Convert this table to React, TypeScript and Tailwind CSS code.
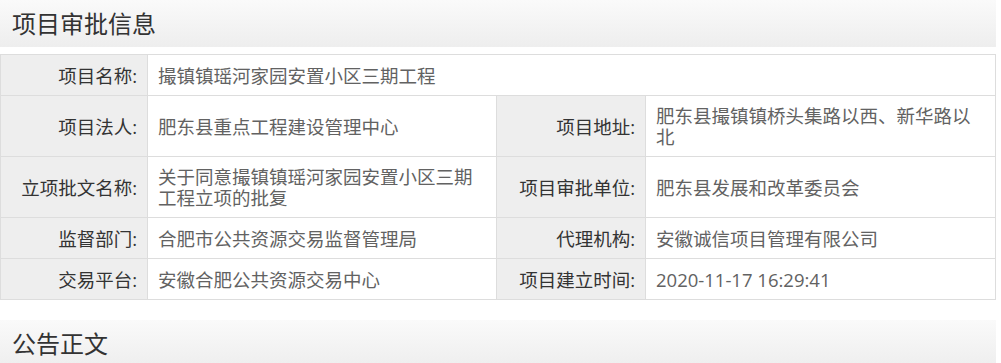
import React from "react";

type Cell = { label: string; value: string; span?: boolean };

const rows: { h: string; cells: Cell[] }[] = [
  { h: "h-[41px]", cells: [{ label: "项目名称:", value: "撮镇镇瑶河家园安置小区三期工程", span: true }] },
  {
    h: "h-[61px]",
    cells: [
      { label: "项目法人:", value: "肥东县重点工程建设管理中心" },
      { label: "项目地址:", value: "肥东县撮镇镇桥头集路以西、新华路以北" },
    ],
  },
  {
    h: "h-[61px]",
    cells: [
      { label: "立项批文名称:", value: "关于同意撮镇镇瑶河家园安置小区三期工程立项的批复" },
      { label: "项目审批单位:", value: "肥东县发展和改革委员会" },
    ],
  },
  {
    h: "h-[41px]",
    cells: [
      { label: "监督部门:", value: "合肥市公共资源交易监督管理局" },
      { label: "代理机构:", value: "安徽诚信项目管理有限公司" },
    ],
  },
  {
    h: "h-[41px]",
    cells: [
      { label: "交易平台:", value: "安徽合肥公共资源交易中心" },
      { label: "项目建立时间:", value: "2020-11-17 16:29:41" },
    ],
  },
];

function SectionTitle({ children }: { children: React.ReactNode }) {
  return (
    <div className="flex h-[47px] items-center bg-linear-to-b from-[#fafafa] to-[#eeeeee] pl-3 text-[24px] leading-none text-[#333]">
      {children}
    </div>
  );
}

export default function App() {
  return (
    <div
      className="w-[996px] bg-white"
      style={{ fontFamily: '"Microsoft YaHei", "Open Sans", "Noto Sans CJK SC", sans-serif' }}
    >
      <SectionTitle>项目审批信息</SectionTitle>

      <div className="mt-[7px] grid grid-cols-[147px_349px_149px_350px] border-t border-l border-[#ddd] text-[18.5px] leading-[21px]">
        {rows.map((row, r) =>
          row.cells.map((c, i) => (
            <React.Fragment key={`${r}-${i}`}>
              <div
                className={`${row.h} flex items-center justify-end border-r border-b border-[#ddd] bg-[#eeeeee] pr-[10px] text-[#333]`}
              >
                {c.label}
              </div>
              <div
                className={`${row.h} flex items-center border-r border-b border-[#ddd] px-[10px] text-[#626262] ${
                  c.span ? "col-span-3" : ""
                }`}
              >
                {c.value}
              </div>
            </React.Fragment>
          )),
        )}
      </div>

      <div className="mt-[20px]">
        <SectionTitle>公告正文</SectionTitle>
      </div>
    </div>
  );
}
